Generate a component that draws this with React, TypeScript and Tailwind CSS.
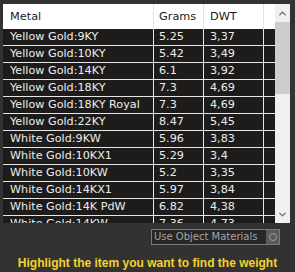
import { ChevronUp, ChevronDown } from 'lucide-react';

const ROWS: [string, string, string][] = [
  ['Yellow Gold:9KY', '5.25', '3,37'],
  ['Yellow Gold:10KY', '5.42', '3,49'],
  ['Yellow Gold:14KY', '6.1', '3,92'],
  ['Yellow Gold:18KY', '7.3', '4,69'],
  ['Yellow Gold:18KY Royal', '7.3', '4,69'],
  ['Yellow Gold:22KY', '8.47', '5,45'],
  ['White Gold:9KW', '5.96', '3,83'],
  ['White Gold:10KX1', '5.29', '3,4'],
  ['White Gold:10KW', '5.2', '3,35'],
  ['White Gold:14KX1', '5.97', '3,84'],
  ['White Gold:14K PdW', '6.82', '4,38'],
  ['White Gold:14KW', '7.36', '4,73'],
];

export default function App() {
  return (
    <div
      className="w-[295px] h-[272px] bg-[#323232] overflow-hidden pt-[4px] pl-[3px]"
      style={{ fontFamily: '"DejaVu Sans", Verdana, sans-serif' }}
    >
      {/* Table */}
      <div className="flex w-[287px] h-[219px]">
        <div className="w-[272px] flex flex-col">
          {/* Header */}
          <div className="flex h-[25px] shrink-0 bg-white text-[#1a1a1a] text-[11.3px] leading-[25px]">
            <div className="w-[151px] pl-[7px] border-r border-[#e2e2e2]">Metal</div>
            <div className="w-[50px] pl-[5px] border-r border-[#e2e2e2]">Grams</div>
            <div className="w-[60px] pl-[6px] border-r border-[#e2e2e2]">DWT</div>
            <div className="flex-1" />
          </div>

          {/* Rows */}
          <div className="flex-1 overflow-hidden bg-[#1e1c1a]">
            {ROWS.map(([metal, grams, dwt]) => (
              <div
                key={metal}
                className="flex h-[17px] border-b border-[#e6e6e6] text-[#ececec] text-[11.2px] leading-[16px]"
              >
                <div className="w-[151px] pl-[7px] border-r border-[#e6e6e6] whitespace-nowrap">{metal}</div>
                <div className="w-[50px] pl-[5px] border-r border-[#e6e6e6]">{grams}</div>
                <div className="w-[60px] pl-[6px] border-r border-[#e6e6e6]">{dwt}</div>
                <div className="flex-1" />
              </div>
            ))}
          </div>
        </div>

        {/* Scrollbar */}
        <div className="w-[15px] flex flex-col bg-[#f0f0f0]">
          <div className="h-[18px] flex items-center justify-center text-[#606060]">
            <ChevronUp size={11} strokeWidth={2.5} />
          </div>
          <div className="h-[72px] bg-[#cdcdcd]" />
          <div className="flex-1" />
          <div className="h-[17px] flex items-center justify-center text-[#606060]">
            <ChevronDown size={11} strokeWidth={2.5} />
          </div>
        </div>
      </div>

      {/* Use Object Materials */}
      <div className="flex justify-end pr-[12px] mt-[6px]">
        <div className="w-[129px] h-[16px] mr-[3px] flex items-center border border-[#7a7a7a] bg-[#262626]">
          <span className="flex-1 pl-[2px] text-[10px] text-[#a4a4a4] leading-none whitespace-nowrap">
            Use Object Materials
          </span>
          <div className="w-[13px] h-[14px] bg-[#5a5a5a] flex items-center justify-center">
            <div className="w-[8px] h-[8px] rounded-full border border-[#9a9a9a]" />
          </div>
        </div>
      </div>

      {/* Hint */}
      <div
        className="mt-[11px] pr-[3px] text-center text-[12px] font-bold text-[#f2d230] leading-[14px] whitespace-nowrap"
        style={{ fontFamily: '"Liberation Sans", Arial, sans-serif' }}
      >
        Highlight the item you want to find the weight
      </div>
    </div>
  );
}
